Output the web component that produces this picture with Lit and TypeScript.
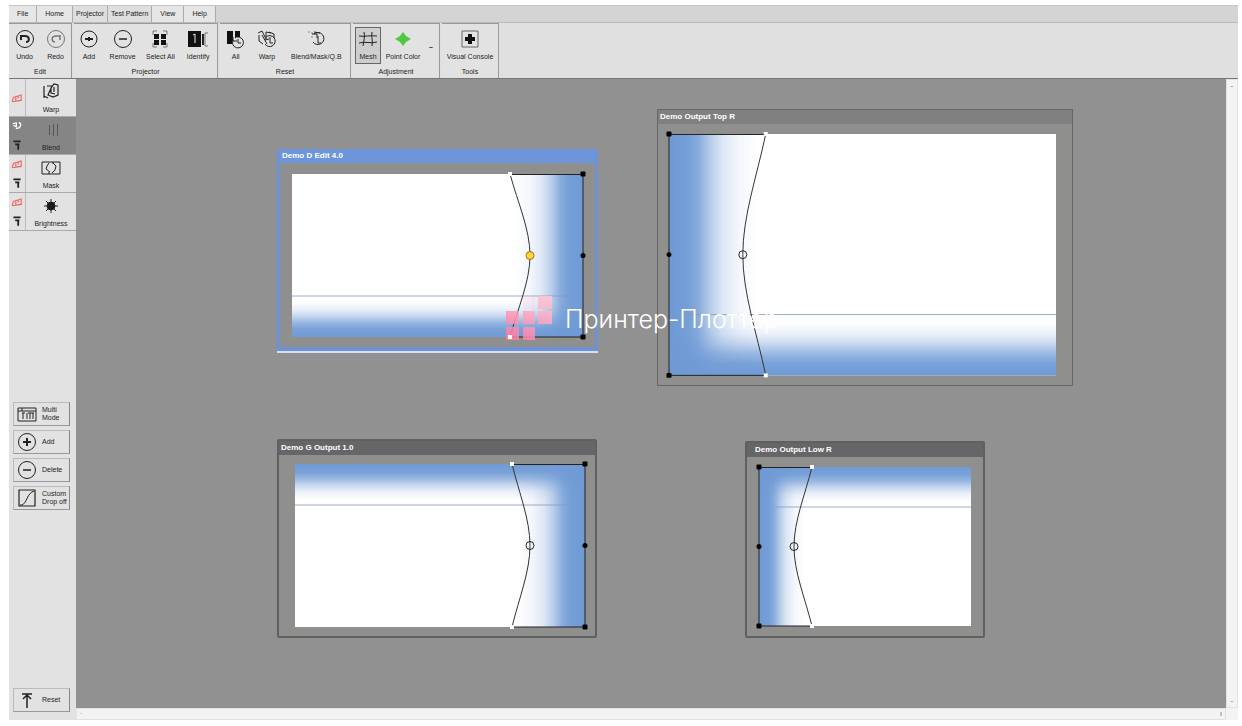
import { LitElement, html, svg, css } from "lit";
import { customElement, property, state } from "lit/decorators.js";
import { classMap } from "lit/directives/class-map.js";
import { styleMap } from "lit/directives/style-map.js";

const icons: Record<string, unknown> = {
  undo: svg`<circle cx="10" cy="10" r="8.5"/><path stroke-width="2" d="M6 11V6M6 7h4c5 0 5 6 1 6"/>`,
  redo: svg`<g stroke="#777"><circle cx="10" cy="10" r="8.5"/><path stroke-width="1.5" d="M14 11V6M14 7h-4c-5 0-5 6-1 6"/></g>`,
  add: svg`<circle cx="10" cy="10" r="8"/><path stroke-width="2" d="M6 10h8M10 8v4"/>`,
  plus: svg`<circle cx="10" cy="10" r="8.500"/><path stroke-width="2" d="M6 10h8M10 6v8"/>`,
  remove: svg`<circle cx="10" cy="10" r="8.5"/><path stroke-width="1.5" d="M6 10h8"/>`,
  selectAll: svg`<path d="M3 6V2h4M13 2h4v4M17 14v4h-4M7 18H3v-4" stroke="#777"/><path fill="#111" stroke="none" d="M4 5h5v5H4zM11 5h5v5h-5zM4 11h5v5H4zM11 11h5v5h-5z"/>`,
  identify: svg`<path fill="#111" stroke="none" d="M0 2h13v16H0z"/><path stroke="#eee" d="M5 6l2-1v9"/><path stroke-width="2" d="M15 5v11"/><path d="M20 4h-3v13h3" stroke="#777"/>`,
  resetAll: svg`<path fill="#111" stroke="none" d="M1 2h6v13H1zM9 2h5v8H9z"/><path fill="#e2e2e2" d="M7 11a5.500 5.500 0 1 0 4-3M7 8v4h4M12 10v4h3"/>`,
  resetWarp: svg`<path d="M1 4l4-2 4 8V3l5 1M2 6v6l4 3M5 6l5 9M9 8a5.500 5.500 0 1 1-1 7M8 11l4-1M13 8v6h3M12 3l5 2v4"/>`,
  resetBlend: svg`<path stroke="#888" stroke-dasharray="2 2" d="M2 3h4v8"/><path d="M8 5a6 6 0 1 1-1 8M6 5h5v4M12 7v7h3M8 3l6 1"/>`,
  mesh: svg`<path d="M6 3c1 4 0 8-1 14M14 3c-1 5 1 8 0 14M1 7c5 1 12-1 18 0M1 14c6-2 12 1 18-1"/>`,
  point: svg`<path fill="#50c845" stroke="none" d="M10 3l3 4 5 3-5 3-3 4-3-4-5-3 5-3z"/>`,
  console: svg`<path d="M2 2h16v16H2z" stroke="#666"/><path fill="#111" stroke="none" d="M8 5h4v3h3v4h-3v3H8v-3H5V8h3z"/>`,
  warp: svg`<path stroke-width="1.2" d="M3 4v12M3 14l4 2M6 4h5l-4 9 5 2 5-2V3l-4-1-3 4v5l4 1M13 5v5"/>`,
  blend: svg`<path stroke="#555" d="M8.500 5v10M12.500 4v12M16.500 4v12"/>`,
  mask: svg`<path d="M1 4h18v12H1z"/><path d="M8 5L6 8l-1 3 4 3M12 5l3 3-1 4-3 3M8 14v2M12 6V4"/>`,
  display: svg`<circle cx="10" cy="10" r="4" fill="#111"/><path d="M10 3v14M3 10h14M5 5l10 10M15 5L5 15"/>`,
  mode: svg`<path d="M1 4h18v13H1zM1 7h18M5 4v3"/><path d="M5 9h3M6 9v6M10 9v6M13 9v6M16 9v6M11 9h6"/>`,
  curve: svg`<path stroke-width="1.2" d="M2 2h16v16H2z"/><path d="M3 17h2c5-2 5-12 12-14"/>`,
  up: svg`<path stroke-width="1.500" d="M5 4h10M10 5v13M6 9l4-4 4 4"/>`,
  pin: svg`<path stroke-width="3" d="M4 4h12M7 9h7M12 9v9"/>`,
  flag: svg`<g stroke="#ee6a62" stroke-width="2"><path d="M2 16L4 9l13-4v9L2 16M8 8v8M12 7v4"/></g>`,
  flagOff: svg`<g stroke="#fff" stroke-width="2"><path d="M3 6l6-1v6L4 9M8 14c8 1 11-7 5-10"/></g>`,
};

const icon = (name: string) =>
  html`<svg class="icon" viewBox="0 0 20 20" fill="none" stroke="#222" stroke-width="1" aria-hidden="true">${icons[name]}</svg>`;

const BLUE = "#6f9ad5";

interface Projector {
  title: string;
  x: number;
  y: number;
  w: number;
  tone: string;
  pad: string;
  pw: number;
  ph: number;
  side: "left" | "right";
  edge: "top" | "bottom";
  edgeSize: number;
  sideSize: number;
  end: number;
  bend: number;
  active?: boolean;
}

const projectors: Projector[] = [
  { title: "Demo D Edit 4.0", x: 201, y: 70, w: 321, tone: "active", pad: "11px 12px 10px 12px", pw: 291, ph: 163, side: "right", edge: "bottom", edgeSize: 41, sideSize: 68, end: 218, bend: 238, active: true },
  { title: "Demo Output Top R", x: 581, y: 30, w: 416, tone: "light", pad: "10px 16px 10px 11px", pw: 388, ph: 242, side: "left", edge: "bottom", edgeSize: 61, sideSize: 90, end: 97, bend: 74 },
  { title: "Demo G Output 1.0", x: 201, y: 360, w: 320, tone: "dark", pad: "9px 10px 9px 16px", pw: 290, ph: 163, side: "right", edge: "top", edgeSize: 41, sideSize: 68, end: 217, bend: 235 },
  { title: "Demo Output Low R", x: 669, y: 362, w: 240, tone: "dark inset", pad: "10px 12px 10px 12px", pw: 212, ph: 159, side: "left", edge: "top", edgeSize: 40, sideSize: 46, end: 53, bend: 35 },
];

@customElement("projector-window")
export class ProjectorWindow extends LitElement {
  @property({ attribute: false }) p!: Projector;

  static styles = css`
    :host { display: block; }
    .frame { box-sizing: border-box; border: 1px solid #666; background: #8f8f8e; }
    .title { height: 14px; line-height: 13px; padding: 0 2px; font-size: 8px; font-weight: 700; color: #fff; background: #808080; white-space: nowrap; }
    .dark { border: 2px solid #5f6060; border-radius: 2px; }
    .dark .title { background: #656667; }
    .inset .title { padding-left: 8px; }
    .active { border: solid #6d93d6; border-width: 0 3px 4px; box-shadow: 0 2px 0 #d6e0f0; }
    .active .title { background: #6d95dc; }
    svg { display: block; width: 100%; height: auto; overflow: visible; }
  `;

  render() {
    const p = this.p;
    const right = p.side === "right";
    const outer = right ? p.pw : 0;
    const lineY = p.edge === "top" ? p.edgeSize : p.ph - p.edgeSize;
    const mid = p.ph / 2;
    const sx = right ? p.pw - p.sideSize : 0;
    const ey = p.edge === "top" ? 0 : lineY;
    const fade = (stops: [number, number][]) =>
      stops.map(([at, alpha]) => svg`<stop offset=${at} stop-color=${BLUE} stop-opacity=${alpha}/>`);
    return html`<section class="frame ${p.tone}">
      <div class="title">${p.title}</div>
      <div style=${styleMap({ padding: p.pad })}>
        <svg viewBox="0 0 ${p.pw} ${p.ph}" role="img" aria-label=${p.title}>
          <defs>
            <linearGradient id="side" x1=${right ? 1 : 0} x2=${right ? 0 : 1} y1="0" y2="0">
              ${fade([[0, 1], [0.2, 0.96], [0.32, 0.84], [0.46, 0.5], [0.6, 0.24], [0.78, 0.08], [1, 0]])}
            </linearGradient>
            <linearGradient id="edge" x1="0" x2="0" y1=${p.edge === "top" ? 0 : 1} y2=${p.edge === "top" ? 1 : 0}>
              ${fade([[0, 1], [0.2, 0.92], [0.36, 0.7], [0.52, 0.38], [0.68, 0.14], [0.85, 0.02], [1, 0]])}
            </linearGradient>
          </defs>
          <rect width=${p.pw} height=${p.ph} fill="#fff"/>
          <rect x=${sx} width=${p.sideSize} height=${p.ph} fill="url(#side)"/>
          <rect y=${ey} width=${p.pw} height=${p.edgeSize} fill="url(#edge)"/>
          <path d="M${right ? 0 : 16} ${lineY}H${right ? p.pw - 16 : p.pw}" stroke="#8499bb" stroke-width=".8"/>
          <path d="M${p.end} .5H${outer}V${p.ph}H${p.end}" fill="none" stroke="#222"/>
          <path d="M${p.end} 0C${p.end + (p.bend - p.end) * 0.4} ${mid * 0.36} ${p.bend} ${mid * 0.68} ${p.bend} ${mid}S${p.end + (p.bend - p.end) * 0.4} ${p.ph - mid * 0.36} ${p.end} ${p.ph}" fill="none" stroke="#333"/>
          ${[0, p.ph].map((y) => svg`<rect x=${outer - 2.5} y=${y - 2.5} width="5" height="5" rx="1"/><rect x=${p.end - 2} y=${y - 2} width="4" height="4" fill="#fff"/>`)}
          <circle cx=${outer} cy=${mid} r="2.500"/>
          <circle cx=${p.bend} cy=${mid} r="4" fill=${p.active ? "#ffd633" : "none"} stroke=${p.active ? "#9a7428" : "#222"}/>
        </svg>
      </div>
    </section>`;
  }
}

interface Tool { icon: string; label: string; size: string }
const groups: { name: string; size: string; tools: Tool[] }[] = [
  { name: "Edit", size: "g-edit", tools: [
    { icon: "undo", label: "Undo", size: "s" }, { icon: "redo", label: "Redo", size: "s" }] },
  { name: "Projector", size: "g-projector", tools: [
    { icon: "add", label: "Add", size: "s" }, { icon: "remove", label: "Remove", size: "m" },
    { icon: "selectAll", label: "Select All", size: "m" }, { icon: "identify", label: "Identify", size: "m" }] },
  { name: "Reset", size: "g-reset", tools: [
    { icon: "resetAll", label: "All", size: "xs" }, { icon: "resetWarp", label: "Warp", size: "xs" },
    { icon: "resetBlend", label: "Blend/Mask/Q.B", size: "l" }] },
  { name: "Adjustment", size: "g-adjust", tools: [
    { icon: "mesh", label: "Mesh", size: "toggle" }, { icon: "point", label: "Point Color", size: "m" }] },
  { name: "Tools", size: "g-tools", tools: [{ icon: "console", label: "Visual Console", size: "l" }] },
];

const modes = [
  { icon: "warp", label: "Warp", pin: false },
  { icon: "blend", label: "Blend", pin: true },
  { icon: "mask", label: "Mask", pin: true },
  { icon: "display", label: "Brightness", pin: true },
];

@customElement("app-root")
export class AppRoot extends LitElement {
  @state() private mode = "Blend";
  @state() private mesh = true;

  static styles = css`
    :host { display: block; background: #fff; color: #222; font: 7px/8px "Liberation Sans", Arial, sans-serif; }
    * { box-sizing: border-box; }
    button { font: inherit; color: inherit; background: none; border: 0; padding: 0; margin: 0; }
    .icon { width: 20px; height: 20px; display: block; flex: none; }
    .app { display: flex; flex-direction: column; min-height: 100vh; padding: 5px 4px 6px 9px; }
    .tabs { display: flex; height: 17px; background: #d4d4d4; border-top: 1px solid #c4c4c4; }
    .tab { color: #222; text-decoration: none; line-height: 16px; padding: 0 3px; text-align: center; border-right: 1px solid #aaa; background: #dedede; white-space: nowrap; }
    .tab.current { background: #e6e6e6; padding: 0 8px; }
    .ribbon { display: flex; gap: 2px; height: 57px; background: #e0e0e0; border-top: 1px solid #bbb; border-bottom: 1px solid #777; }
    .group { display: flex; flex-direction: column; border: solid #999; border-width: 1px 1px 0 0; background: #e2e2e2; }
    .g-edit { width: 63px; } .g-projector { width: 144px; } .g-reset { width: 131px; }
    .g-adjust { width: 87px; } .g-tools { width: 57px; }
    .tools { display: flex; flex: 1; justify-content: space-around; padding-top: 3px; }
    .group-name { text-align: center; height: 12px; line-height: 12px; }
    .tool { display: flex; flex-direction: column; align-items: center; gap: 4px; height: 37px; padding-top: 2px; white-space: nowrap; }
    .tool.xs { width: 20px; } .tool.s { width: 28px; } .tool.m { width: 36px; } .tool.l { width: 56px; } .tool.toggle { width: 26px; }
    .tool.on { background: #cecece; border: 1px solid #666; padding-top: 1px; }
    .more { width: 12px; font-weight: 700; }
    .body { display: flex; flex: 1; }
    .side { display: flex; flex-direction: column; width: 67px; background: #e2e2e2; padding-bottom: 8px; }
    .mode { display: flex; height: 38px; border-bottom: 1px solid #aaa; }
    .mode.on { background: #858585; }
    .marks { display: flex; flex-direction: column; align-items: center; justify-content: space-around; width: 17px; border-right: 1px solid #bbb; }
    .mode.on .marks { border-color: #858585; }
    .marks .icon { width: 12px; height: 12px; }
    .mode-button { flex: 1; display: flex; flex-direction: column; align-items: center; justify-content: center; gap: 4px; }
    .commands { display: flex; flex-direction: column; gap: 4px; margin: auto 6px auto 4px; padding-bottom: 8px; }
    .command { display: flex; align-items: center; gap: 5px; width: 57px; height: 24px; padding-left: 3px; text-align: left; border: 1px solid #bbb; border-right-color: #888; border-bottom-color: #999; }
    .reset { margin: 0 6px 0 4px; }
    .work { flex: 1; display: grid; grid-template: 1fr 12px / 1fr 12px; min-width: 0; }
    .canvas { position: relative; overflow: hidden; background: #919191; }
    .window { position: absolute; }
    .brand { position: absolute; left: 430px; top: 217px; display: flex; align-items: center; gap: 13px; pointer-events: none; color: #fff; font: 300 25px/46px Inter, "Open Sans", sans-serif; }
    .brand svg { width: 46px; height: 46px; }
    .bar { display: flex; justify-content: space-between; background: #f3f3f3; border: 1px solid #e2e2e2; color: #555; }
    .bar.vertical { flex-direction: column; align-items: center; padding: 2px 0; }
    .bar.horizontal { align-items: center; padding: 0 3px; }
    .corner { background: #f3f3f3; }
  `;

  render() {
    return html`<div class="app">
      <nav class="tabs">
        ${["File", "Home", "Projector", "Test Pattern", "View", "Help"].map((t) =>
          html`<a href="#" class=${classMap({ tab: true, current: t !== "Projector" && t !== "Test Pattern" })}>${t}</a>`)}
      </nav>
      <div class="ribbon">
        ${groups.map((g) => html`<div class="group ${g.size}">
          <div class="tools">
            ${g.tools.map((t) => html`<button class="tool ${t.size} ${t.icon === "mesh" && this.mesh ? "on" : ""}"
              @click=${() => { if (t.icon === "mesh") this.mesh = !this.mesh; }}>${icon(t.icon)}<span>${t.label}</span></button>`)}
            ${g.name === "Adjustment" ? html`<button class="more" aria-label="More">–</button>` : ""}
          </div>
          <div class="group-name">${g.name}</div>
        </div>`)}
      </div>
      <div class="body">
        <aside class="side">
          ${modes.map((m) => html`<div class=${classMap({ mode: true, on: m.label === this.mode })}>
            <div class="marks">${icon(m.label === this.mode ? "flagOff" : "flag")}${m.pin ? icon("pin") : ""}</div>
            <button class="mode-button" @click=${() => (this.mode = m.label)}>${icon(m.icon)}<span>${m.label}</span></button>
          </div>`)}
          <div class="commands">
            <button class="command">${icon("mode")}<span>Multi<br>Mode</span></button>
            <button class="command">${icon("plus")}<span>Add</span></button>
            <button class="command">${icon("remove")}<span>Delete</span></button>
            <button class="command">${icon("curve")}<span>Custom<br>Drop off</span></button>
          </div>
          <button class="command reset">${icon("up")}<span>Reset</span></button>
        </aside>
        <div class="work">
          <main class="canvas">
            ${projectors.map((p) => html`<projector-window class="window" .p=${p}
              style=${styleMap({ left: `${p.x}px`, top: `${p.y}px`, width: `${p.w}px` })}></projector-window>`)}
            <div class="brand">
              <svg viewBox="0 0 46 46" aria-hidden="true">
                <defs><linearGradient id="pink" gradientUnits="userSpaceOnUse" x1="10" y1="46" x2="40" y2="0"><stop stop-color="#ff7ca6"/><stop offset="1" stop-color="#ffc4d2"/></linearGradient></defs>
                <g fill="url(#pink)" opacity=".85"><path d="M32 0h14v13H32zM0 15h13v13H0zM17 15h12v13H17zM32 15h14v13H32zM0 31h13v13H0zM17 31h12v13H17z"/></g>
                <path d="M17 0h12v13H17z" fill="#ffc4d2" opacity=".25"/>
                <path d="M2 39h4v4H2z" fill="#fff"/>
              </svg>
              <span>Принтер-Плоттер</span>
            </div>
          </main>
          <div class="bar vertical"><span>-</span><span>-</span></div>
          <div class="bar horizontal"><span>·</span><span>ı</span></div>
          <div class="corner"></div>
        </div>
      </div>
    </div>`;
  }
}
